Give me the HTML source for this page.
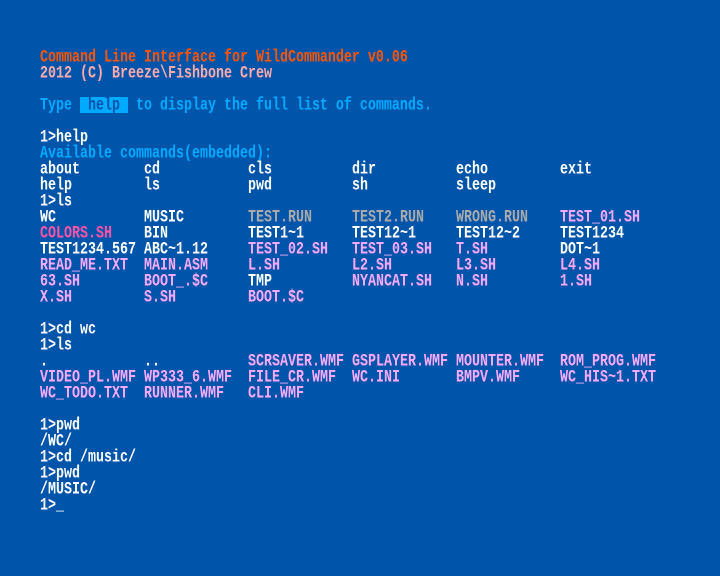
<!DOCTYPE html>
<html><head><meta charset="utf-8"><style>
html,body{margin:0;padding:0;background:#0055aa;width:720px;height:576px;overflow:hidden}
.s{position:absolute;font-family:"Liberation Mono",monospace;font-weight:bold;font-size:13.33px;line-height:16px;height:16px;white-space:pre;transform:translateY(3px) scaleY(1.35);transform-origin:50% 50%;color:#fff}
.o{color:#ff5500}.k{color:#ffaaaa}.c{color:#00aaff}.p{color:#ffaaff}.h{color:#ff55aa}.g{color:#aaaaaa}
.hl{position:absolute;left:80px;top:97px;width:48px;height:16px;background:#00aaff}
</style></head><body>
<div class="hl"></div>
<div class="s o" style="left:40px;top:48px">Command Line Interface for WildCommander v0.06</div>
<div class="s k" style="left:40px;top:64px">2012 (C) Breeze\Fishbone Crew</div>
<div class="s c" style="left:40px;top:96px">Type        to display the full list of commands.</div>
<div class="s" style="left:88px;top:96px;color:#0055aa">help</div>
<div class="s" style="left:40px;top:128px">1&gt;help</div>
<div class="s c" style="left:40px;top:144px">Available commands(embedded):</div>
<div class="s" style="left:40px;top:160px">about</div><div class="s" style="left:144px;top:160px">cd</div><div class="s" style="left:248px;top:160px">cls</div><div class="s" style="left:352px;top:160px">dir</div><div class="s" style="left:456px;top:160px">echo</div><div class="s" style="left:560px;top:160px">exit</div>
<div class="s" style="left:40px;top:176px">help</div><div class="s" style="left:144px;top:176px">ls</div><div class="s" style="left:248px;top:176px">pwd</div><div class="s" style="left:352px;top:176px">sh</div><div class="s" style="left:456px;top:176px">sleep</div>
<div class="s" style="left:40px;top:192px">1&gt;ls</div>
<div class="s" style="left:40px;top:208px">WC</div><div class="s" style="left:144px;top:208px">MUSIC</div><div class="s g" style="left:248px;top:208px">TEST.RUN</div><div class="s g" style="left:352px;top:208px">TEST2.RUN</div><div class="s g" style="left:456px;top:208px">WRONG.RUN</div><div class="s p" style="left:560px;top:208px">TEST_01.SH</div>
<div class="s h" style="left:40px;top:224px">COLORS.SH</div><div class="s" style="left:144px;top:224px">BIN</div><div class="s" style="left:248px;top:224px">TEST1~1</div><div class="s" style="left:352px;top:224px">TEST12~1</div><div class="s" style="left:456px;top:224px">TEST12~2</div><div class="s" style="left:560px;top:224px">TEST1234</div>
<div class="s" style="left:40px;top:240px">TEST1234.567</div><div class="s" style="left:144px;top:240px">ABC~1.12</div><div class="s p" style="left:248px;top:240px">TEST_02.SH</div><div class="s p" style="left:352px;top:240px">TEST_03.SH</div><div class="s p" style="left:456px;top:240px">T.SH</div><div class="s" style="left:560px;top:240px">DOT~1</div>
<div class="s p" style="left:40px;top:256px">READ_ME.TXT</div><div class="s p" style="left:144px;top:256px">MAIN.ASM</div><div class="s p" style="left:248px;top:256px">L.SH</div><div class="s p" style="left:352px;top:256px">L2.SH</div><div class="s p" style="left:456px;top:256px">L3.SH</div><div class="s p" style="left:560px;top:256px">L4.SH</div>
<div class="s p" style="left:40px;top:272px">63.SH</div><div class="s p" style="left:144px;top:272px">BOOT_.$C</div><div class="s" style="left:248px;top:272px">TMP</div><div class="s p" style="left:352px;top:272px">NYANCAT.SH</div><div class="s p" style="left:456px;top:272px">N.SH</div><div class="s p" style="left:560px;top:272px">1.SH</div>
<div class="s p" style="left:40px;top:288px">X.SH</div><div class="s p" style="left:144px;top:288px">S.SH</div><div class="s p" style="left:248px;top:288px">BOOT.$C</div>
<div class="s" style="left:40px;top:320px">1&gt;cd wc</div>
<div class="s" style="left:40px;top:336px">1&gt;ls</div>
<div class="s" style="left:40px;top:352px">.</div><div class="s" style="left:144px;top:352px">..</div><div class="s p" style="left:248px;top:352px">SCRSAVER.WMF</div><div class="s p" style="left:352px;top:352px">GSPLAYER.WMF</div><div class="s p" style="left:456px;top:352px">MOUNTER.WMF</div><div class="s p" style="left:560px;top:352px">ROM_PROG.WMF</div>
<div class="s p" style="left:40px;top:368px">VIDEO_PL.WMF</div><div class="s p" style="left:144px;top:368px">WP333_6.WMF</div><div class="s p" style="left:248px;top:368px">FILE_CR.WMF</div><div class="s p" style="left:352px;top:368px">WC.INI</div><div class="s p" style="left:456px;top:368px">BMPV.WMF</div><div class="s p" style="left:560px;top:368px">WC_HIS~1.TXT</div>
<div class="s p" style="left:40px;top:384px">WC_TODO.TXT</div><div class="s p" style="left:144px;top:384px">RUNNER.WMF</div><div class="s p" style="left:248px;top:384px">CLI.WMF</div>
<div class="s" style="left:40px;top:416px">1&gt;pwd</div>
<div class="s" style="left:40px;top:432px">/WC/</div>
<div class="s" style="left:40px;top:448px">1&gt;cd /music/</div>
<div class="s" style="left:40px;top:464px">1&gt;pwd</div>
<div class="s" style="left:40px;top:480px">/MUSIC/</div>
<div class="s" style="left:40px;top:496px">1&gt;_</div>
</body></html>
